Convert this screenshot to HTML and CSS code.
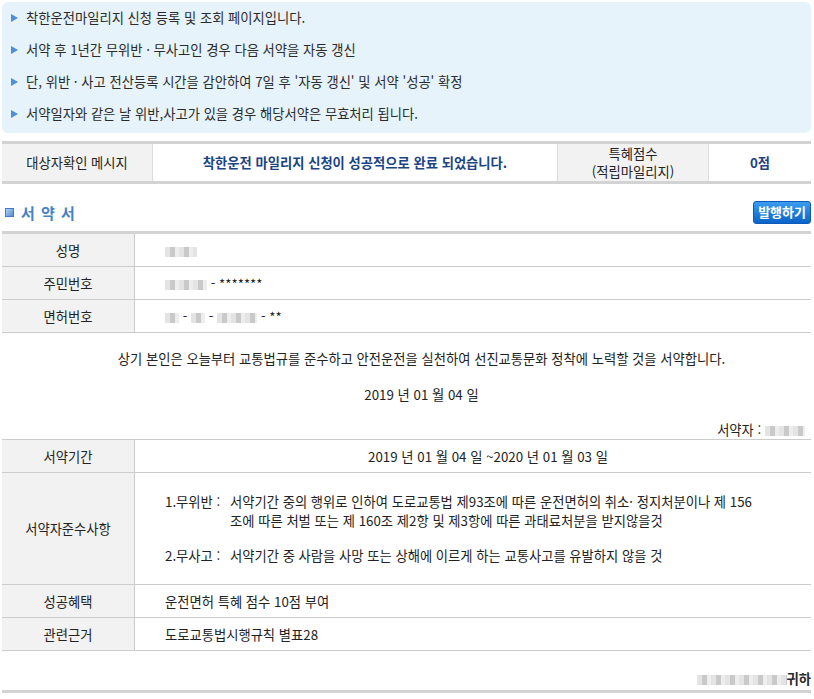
FILE: index.html
```html
<!DOCTYPE html>
<html lang="ko">

<head>
    <meta charset="UTF-8">
    <meta name="viewport" content="width=device-width, initial-scale=1">
    <title>착한운전 마일리지 서약서</title>
    <link rel="stylesheet" href="styles.css">
</head>

<body>
    <ul class="notice">
        <li>착한운전마일리지 신청 등록 및 조회 페이지입니다.</li>
        <li>서약 후 1년간 무위반 · 무사고인 경우 다음 서약을 자동 갱신</li>
        <li>단, 위반 · 사고 전산등록 시간을 감안하여 7일 후 '자동 갱신' 및 서약 '성공' 확정</li>
        <li>서약일자와 같은 날 위반,사고가 있을 경우 해당서약은 무효처리 됩니다.</li>
    </ul>

    <table class="summary">
        <tr>
            <th class="col-label">대상자확인 메시지</th>
            <td class="col-msg">착한운전 마일리지 신청이 성공적으로 완료 되었습니다.</td>
            <th class="col-label2">특혜점수<br>(적립마일리지)</th>
            <td class="col-point">0점</td>
        </tr>
    </table>

    <div class="section-head">
        <h2 class="section-title"><span class="title-icon"></span>서 약 서</h2>
        <button class="btn-issue" type="button">발행하기</button>
    </div>

    <table class="form-table top-thick">
        <tr>
            <th>성명</th>
            <td><span class="mask" style="width: 32px"></span></td>
        </tr>
        <tr>
            <th>주민번호</th>
            <td><span class="mask" style="width: 42px"></span> - *******</td>
        </tr>
        <tr>
            <th>면허번호</th>
            <td><span class="mask" style="width: 14px"></span> - <span class="mask" style="width: 14px"></span> - <span class="mask" style="width: 40px"></span> - **</td>
        </tr>
    </table>

    <div class="pledge">
        <p class="pledge-text">상기 본인은 오늘부터 교통법규를 준수하고 안전운전을 실천하여 선진교통문화 정착에 노력할 것을 서약합니다.</p>
        <p class="pledge-date">2019 년 01 월 04 일</p>
        <p class="pledge-sign">서약자 : <span class="mask" style="width: 40px"></span></p>
    </div>

    <table class="form-table detail">
        <tr class="row-period">
            <th>서약기간</th>
            <td class="center">2019 년 01 월 04 일 ~2020 년 01 월 03 일</td>
        </tr>
        <tr class="row-rules">
            <th>서약자준수사항</th>
            <td>
                <dl class="rule">
                    <dt>1.무위반 :</dt>
                    <dd>서약기간 중의 행위로 인하여 도로교통법 제93조에 따른 운전면허의 취소· 정지처분이나 제 156<br>조에 따른 처벌 또는 제 160조 제2항 및 제3항에 따른 과태료처분을 받지않을것</dd>
                </dl>
                <dl class="rule">
                    <dt>2.무사고 :</dt>
                    <dd>서약기간 중 사람을 사망 또는 상해에 이르게 하는 교통사고를 유발하지 않을 것</dd>
                </dl>
            </td>
        </tr>
        <tr>
            <th>성공혜택</th>
            <td>운전면허 특혜 점수 10점 부여</td>
        </tr>
        <tr>
            <th>관련근거</th>
            <td>도로교통법시행규칙 별표28</td>
        </tr>
    </table>

    <p class="addressee"><span class="mask" style="width: 90px"></span>귀하</p>
    <div class="bottom-line"></div>
</body>

</html>
```

FILE: styles.css
```css
:root {
    --text-color: #2b2b2b;
    --cell-text: #222;
    --label-bg: #f2f2f2;
    --line-color: #cccccc;
    --thick-line: #d3d3d3;
    --notice-bg: #e6f3fa;
    --navy: #1c4383;
    --title-blue: #4283c8;
}

body {
    font-family: "Noto Sans CJK KR", "Noto Sans", sans-serif;
    font-size: 13.3px;
    color: var(--text-color);
    margin: 0;
    padding: 2px 3px 0 2px;
    background-color: #fff;
}

/* top notice box */
.notice {
    list-style: none;
    margin: 0;
    padding: 0 0 3px 0;
    background-color: var(--notice-bg);
    border-radius: 6px;
}

.notice li {
    height: 32px;
    line-height: 32px;
    padding-left: 9px;
    display: flex;
    align-items: center;
}

.notice li::before {
    content: '';
    width: 0;
    height: 0;
    border-top: 4px solid transparent;
    border-bottom: 4px solid transparent;
    border-left: 7px solid #4b8fd6;
    margin-right: 8px;
}

/* summary row */
table {
    width: 100%;
    border-collapse: collapse;
    table-layout: fixed;
}

.summary {
    margin-top: 8px;
    border-top: 3px solid var(--thick-line);
    border-bottom: 3px solid var(--thick-line);
}

.summary th,
.summary td {
    height: 37px;
    padding: 0;
    text-align: center;
    border-left: 1px solid #dcdcdc;
    line-height: 18px;
}

.summary th {
    background-color: var(--label-bg);
    font-weight: normal;
    color: var(--cell-text);
}

.summary .col-label {
    width: 150px;
    border-left: none;
}

.summary .col-msg {
    width: 404px;
    color: var(--navy);
    font-weight: bold;
}

.summary .col-label2 {
    width: 150px;
}

.summary .col-point {
    color: var(--navy);
    font-weight: bold;
}

/* section header */
.section-head {
    display: flex;
    justify-content: space-between;
    align-items: center;
    height: 47px;
    padding-top: 9px;
    box-sizing: border-box;
}

.section-title {
    margin: 0;
    display: flex;
    align-items: center;
    font-size: 15px;
    font-weight: bold;
    color: var(--title-blue);
    padding-left: 3px;
    word-spacing: 2px;
}

.title-icon {
    width: 7px;
    height: 7px;
    border: 1px solid #3f7dc8;
    background: linear-gradient(135deg, #b3d2f2, #4f8fd8);
    margin-right: 7px;
}

.btn-issue {
    font-family: inherit;
    font-size: 13px;
    font-weight: bold;
    color: #fff;
    border: 1px solid #0b5ab8;
    border-radius: 3px;
    background: linear-gradient(to bottom, #3a9cf0, #0c63c9);
    padding: 0 4px;
    height: 23px;
    line-height: 20px;
}

/* form tables */
.form-table th,
.form-table td {
    border-bottom: 1px solid var(--line-color);
    padding: 0;
    height: 32px;
    color: var(--cell-text);
}

.form-table th {
    width: 132px;
    background-color: var(--label-bg);
    border-right: 1px solid var(--line-color);
    font-weight: normal;
}

.form-table td {
    padding-left: 30px;
    text-align: left;
}

.top-thick {
    border-top: 3px solid var(--thick-line);
}

.detail {
    border-top: 1px solid var(--line-color);
}

.form-table td.center {
    text-align: center;
    padding-left: 30px;
    padding-right: 0;
}

.row-rules td {
    height: 111px;
}

.rule {
    display: flex;
    margin: 0;
    line-height: 19px;
}

.rule + .rule {
    margin-top: 16px;
}

.rule dt {
    width: 65px;
    flex-shrink: 0;
}

.rule dd {
    margin: 0;
    width: 560px;
}

/* pledge */
.pledge {
    text-align: center;
    color: var(--cell-text);
}

.pledge p {
    margin: 0;
}

.pledge-text {
    padding-top: 17px;
    padding-left: 30px;
    height: 18px;
    line-height: 18px;
}

.pledge-date {
    margin-top: 18px !important;
    padding-left: 30px;
    line-height: 18px;
}

.pledge-sign {
    text-align: right;
    margin-top: 17px !important;
    padding-right: 6px;
    line-height: 18px;
    height: 18px;
}

/* mosaic placeholder for masked personal data */
.mask {
    display: inline-block;
    height: 10px;
    vertical-align: -1px;
    background:
        repeating-linear-gradient(90deg, #e4e4e4 0 5px, #c9c9c9 5px 10px, #ededed 10px 14px);
    filter: blur(0.6px);
}

.addressee {
    margin: 0;
    text-align: right;
    height: 38px;
    line-height: 18px;
    padding-top: 19px;
    box-sizing: border-box;
    font-weight: bold;
}

.bottom-line {
    height: 3px;
    background-color: var(--thick-line);
    margin-top: 1px;
}
```
